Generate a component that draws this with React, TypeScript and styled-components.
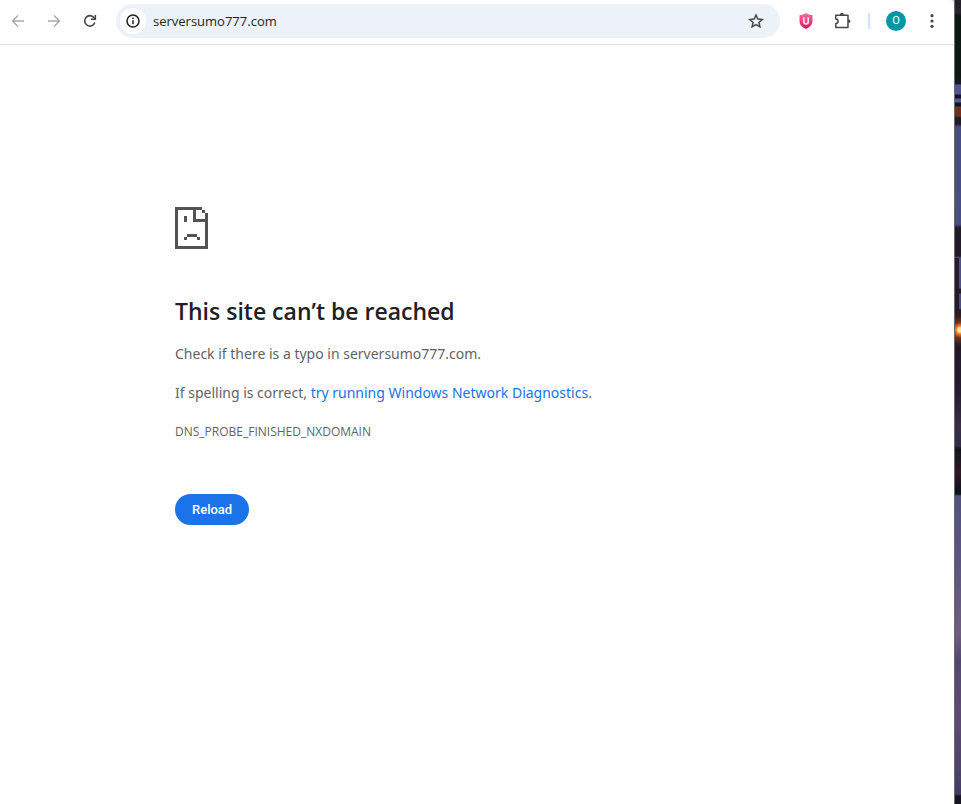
import React from 'react';
import styled, { createGlobalStyle } from 'styled-components';

const GlobalStyle = createGlobalStyle`
  * { box-sizing: border-box; }
  html, body, #root { height: 100%; }
  body { margin: 0; background: #fff; font-family: "Noto Sans", "Open Sans", sans-serif; }
`;

const Desktop = styled.div`
  display: grid;
  grid-template-columns: minmax(0, 1fr) 7px;
  min-height: 100%;
  background: #b9c8ee;
`;

const BrowserWindow = styled.div`
  display: flex;
  flex-direction: column;
  background: #fff;
  border-top-right-radius: 4px;
`;

const Wallpaper = styled.div`
  border-left: 1px solid #6a6a6c;
  background:
    radial-gradient(circle at 5px 330px, #ffe9a0 0 2px, #f77a22 4px, #8c3517aa 8px, transparent 14px),
    linear-gradient(90deg, #251b29 4px, transparent 4px) 0 258px / 100% 52px no-repeat,
    linear-gradient(
      #241f2a 0 4px, #2c2230 12px, #0c1712 16px, #0e1714 78px, #20182a 84px,
      #50558f 85px 94px, #15132c 95px 98px, #555b91 99px 102px, #15132c 103px 106px,
      #7a2c1c 107px 116px, #231a27 118px 124px, #474b84 127px, #4a4e87 224px,
      #211b2a 228px 256px, #4d5088 258px 288px, #241a28 289px 293px,
      #4b4d80 294px 308px, #241a28 310px, #512719 330px, #211a29 348px,
      #231c2e 390px, #382d45 425px, #342c45 446px, #10141b 449px, #321827 472px,
      #0a1319 494px, #535080 496px, #5a5583 560px, #6e5d7e 634px,
      #534873 660px, #5d4a70 720px, #4a4167 780px, #443b62 794px, #17151f 796px 100%
    );
`;

const Toolbar = styled.header`
  display: flex;
  align-items: center;
  height: 45px;
  padding: 0 12px 3px 8px;
  border-bottom: 1px solid #dfe1e5;
`;

const Navigation = styled.nav`
  display: flex;
  gap: 16px;
`;

const IconButton = styled.button<{ $muted?: boolean }>`
  display: grid;
  place-items: center;
  width: 20px;
  height: 20px;
  padding: 0;
  border: 0;
  background: none;
  color: ${({ $muted }) => ($muted ? '#ababab' : '#474747')};
  svg { display: block; }
`;

const AddressBar = styled.div`
  display: flex;
  flex: 1;
  align-items: center;
  min-width: 0;
  height: 34px;
  margin-left: 16px;
  padding: 0 14px 0 4px;
  border-radius: 17px;
  background: #ecf1fa;
`;

const SiteInfo = styled(IconButton)`
  flex: none;
  width: 26px;
  height: 26px;
  border-radius: 50%;
  background: #fff;
  color: #1f1f1f;
`;

const AddressInput = styled.input`
  flex: 1;
  min-width: 0;
  padding: 0 0 0 7px;
  border: 0;
  outline: 0;
  background: none;
  color: #1f1f1f;
  font: 13px/20px "Open Sans", sans-serif;
`;

const Actions = styled.div`
  display: flex;
  align-items: center;
  gap: 16px;
  margin-left: 16px;
`;

const Divider = styled.span`
  width: 2px;
  height: 16px;
  background: #d3e3fd;
`;

const Avatar = styled.button`
  width: 20px;
  height: 20px;
  padding: 0;
  border: 0;
  border-radius: 50%;
  background: #0097a7;
  color: #fff;
  font: 11px/20px Roboto, sans-serif;
`;

const ErrorPage = styled.main`
  width: 100%;
  max-width: 652px;
  margin: 0 auto;
  padding: 162px 24px 40px;
  color: #5f6368;
  font-size: 14px;
  line-height: 23px;
`;

const PageIcon = styled.svg`
  display: block;
  width: 33px;
  height: 42px;
  margin-bottom: 48px;
  fill: #535353;
`;

const Title = styled.h1`
  margin: 0 0 16px;
  color: #202124;
  font-family: "Open Sans", sans-serif;
  font-size: 23px;
  font-weight: 600;
  line-height: 29px;
`;

const Paragraph = styled.p`
  margin: 0 0 16px;
`;

const DiagnosticsLink = styled.a`
  color: #1a73e8;
  text-decoration: none;
`;

const ErrorCode = styled.div`
  font-family: "Open Sans", sans-serif;
  font-size: 12px;
`;

const ReloadButton = styled.button`
  height: 31px;
  margin-top: 51px;
  padding: 0 17px;
  border: 0;
  border-radius: 16px;
  background: #1a73e8;
  color: #fff;
  font: 500 13px/16px Roboto, sans-serif;
`;

const Stroke = ({ children }: { children: React.ReactNode }) => (
  <svg width="20" height="20" viewBox="0 0 20 20" fill="none" stroke="currentColor" strokeWidth="1.5" aria-hidden="true">
    {children}
  </svg>
);

export default function App() {
  return (
    <>
      <GlobalStyle />
      <Desktop>
        <BrowserWindow>
          <Toolbar>
            <Navigation aria-label="Browser navigation">
              <IconButton $muted aria-label="Back">
                <Stroke><path d="M16 10H5M10 4.5 4.5 10l5.500 5.500" /></Stroke>
              </IconButton>
              <IconButton $muted aria-label="Forward">
                <Stroke><path d="M4 10h11M10 4.500 15.500 10 10 15.500" /></Stroke>
              </IconButton>
              <IconButton aria-label="Reload this page">
                <Stroke>
                  <path d="M14.800 11.500A5.200 5.200 0 1 1 14 6.700L15.200 8" strokeWidth="1.600" />
                  <path d="M15.300 4v4.300H11" strokeWidth="1.600" />
                </Stroke>
              </IconButton>
            </Navigation>
            <AddressBar>
              <SiteInfo aria-label="View site information">
                <Stroke>
                  <circle cx="10" cy="10" r="6" />
                  <path d="M10 9.200v4M10 6.500v1.500" />
                </Stroke>
              </SiteInfo>
              <AddressInput aria-label="Address" defaultValue="serversumo777.com" spellCheck={false} />
              <IconButton aria-label="Bookmark this page">
                <Stroke>
                  <path d="m10 4 1.800 4.100 4.400.400-3.300 3 1 4.300L10 13.500l-3.900 2.300 1-4.300-3.300-3 4.400-.400Z" />
                </Stroke>
              </IconButton>
            </AddressBar>
            <Actions>
              <IconButton aria-label="U shield extension">
                <svg width="20" height="20" viewBox="0 0 20 20" aria-hidden="true">
                  <defs>
                    <linearGradient id="shield" x2="0" y2="1">
                      <stop stopColor="#fb6f9e" />
                      <stop offset="1" stopColor="#d9145f" />
                    </linearGradient>
                  </defs>
                  <path d="M10 2c2 1.500 4.300 2 6.500 2v6c0 3.800-2.500 6.200-6.500 8-4-1.800-6.500-4.200-6.500-8V4C5.700 4 8 3.500 10 2Z" fill="url(#shield)" />
                  <path d="M7.800 6.200v4.500c0 2.900 4.400 2.900 4.400 0V6.200" fill="none" stroke="#ffe0ec" strokeWidth="1.700" />
                </svg>
              </IconButton>
              <IconButton aria-label="Extensions">
                <Stroke>
                  <path d="M3.800 4.200h12.200v12.200H3.800v-3.800c3-.2 3-4.300 0-4.500Z" strokeLinejoin="round" />
                  <path d="M8 3.700a1.900 1.900 0 0 1 3.800 0v.5H8ZM16.300 8.500h.4a1.800 1.800 0 0 1 0 3.600h-.4Z" fill="currentColor" stroke="none" />
                </Stroke>
              </IconButton>
              <Divider />
              <Avatar aria-label="Profile O">O</Avatar>
              <IconButton aria-label="Browser menu">
                <svg width="20" height="20" viewBox="0 0 20 20" fill="currentColor" aria-hidden="true">
                  <circle cx="10" cy="4.700" r="1.600" />
                  <circle cx="10" cy="10" r="1.600" />
                  <circle cx="10" cy="15.300" r="1.600" />
                </svg>
              </IconButton>
            </Actions>
          </Toolbar>
          <ErrorPage>
            <PageIcon viewBox="0 0 33 42" shapeRendering="crispEdges" aria-hidden="true">
              <path d="M0 0h27v3h-6v9h9V6h3v36H0ZM3 3v36h27V15H18V3ZM27 3h3v3h-3ZM9 9h3v6H9ZM12 27h10v3H12ZM9 30h3v3H9ZM22 30h3v3h-3Z" fillRule="evenodd" />
            </PageIcon>
            <Title>This site can’t be reached</Title>
            <Paragraph>Check if there is a typo in serversumo777.com.</Paragraph>
            <Paragraph>
              If spelling is correct, <DiagnosticsLink href="#diagnostics">try running Windows Network Diagnostics</DiagnosticsLink>.
            </Paragraph>
            <ErrorCode>DNS_PROBE_FINISHED_NXDOMAIN</ErrorCode>
            <ReloadButton>Reload</ReloadButton>
          </ErrorPage>
        </BrowserWindow>
        <Wallpaper />
      </Desktop>
    </>
  );
}
